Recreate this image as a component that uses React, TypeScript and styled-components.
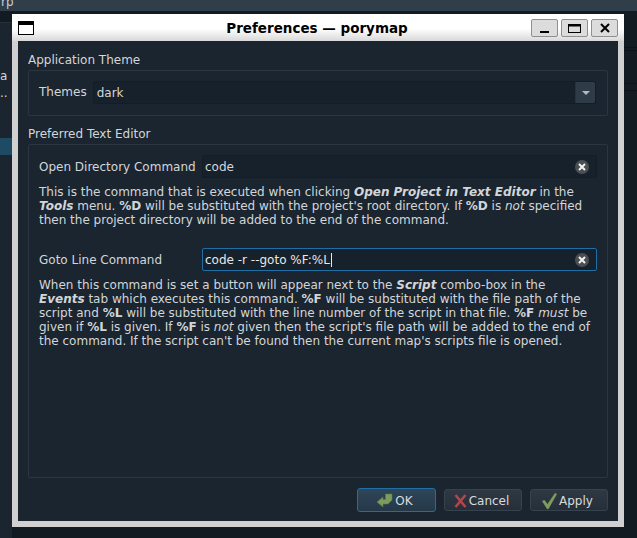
import styled, { createGlobalStyle } from 'styled-components';

const GlobalStyle = createGlobalStyle`
  html, body {
    margin: 0;
    padding: 0;
    background: #11181f;
  }
  #root {
    width: 637px;
    height: 538px;
    overflow: hidden;
  }
`;

const Desktop = styled.div`
  position: relative;
  width: 637px;
  height: 538px;
  background: #121a22;
  font: 12px 'DejaVu Sans', sans-serif;
  color: #d3d6d9;
  overflow: hidden;
`;

const BackBar = styled.div`
  height: 11px;
  padding-left: 1px;
  background: #303e4a;
  color: #c8ccd0;
  font-size: 12px;
  line-height: 4px;
`;

const BackSide = styled.div`
  position: absolute;
  left: 0;
  top: 22px;
  width: 12px;
  height: 516px;
  background: #1a2530;
  border-top: 1px solid #253039;
`;

const BackText = styled.div<{ $top: number }>`
  position: absolute;
  left: 0;
  top: ${p => p.$top}px;
  line-height: 14px;
`;

const BackSelected = styled.div`
  position: absolute;
  left: 0;
  top: 115px;
  width: 12px;
  height: 17px;
  background: #1f4a63;
`;

const BackRule = styled.div<{ $top: number }>`
  position: absolute;
  left: 624px;
  right: 0;
  top: ${p => p.$top}px;
  height: 1px;
  background: #0c1218;
`;

const Window = styled.div`
  position: absolute;
  left: 12px;
  top: 14px;
  width: 612px;
  height: 513px;
  display: flex;
  flex-direction: column;
  background: #d0d0d0;
  border-radius: 2px 2px 0 0;
`;

const TitleBar = styled.div`
  height: 27px;
  flex: none;
  display: flex;
  align-items: center;
  padding: 0 6px;
  background: linear-gradient(#ffffff 0, #ffffff 55%, #d8d8d8 100%);
`;

const TitleText = styled.div`
  flex: 1;
  text-align: center;
  font: bold 13.5px 'DejaVu Sans', sans-serif;
  color: #000;
  padding-left: 69px;
`;

const WinButtons = styled.div`
  display: flex;
  gap: 3px;
  margin-top: 1px;
`;

const WinButton = styled.div`
  width: 27px;
  height: 18px;
  box-sizing: border-box;
  display: flex;
  align-items: center;
  justify-content: center;
  background: #dcdcdc;
  border: 1px solid #8f8f8f;
  border-radius: 2px;
`;

const Content = styled.div`
  flex: 1;
  margin: 0 6px 6px;
  background: #1a2530;
  padding: 12px 10px 9px;
  display: flex;
  flex-direction: column;
`;

const GroupTitle = styled.div<{ $mt?: number }>`
  line-height: 14px;
  margin-top: ${p => p.$mt ?? 0}px;
  margin-bottom: 3px;
`;

const ThemeBox = styled.div`
  height: 46px;
  box-sizing: border-box;
  flex: none;
  border: 1px solid #2b3640;
  border-radius: 2px;
  padding: 10px 11px 0 10px;
  display: flex;
  align-items: flex-start;
  gap: 6px;
`;

const EditorBox = styled.div`
  flex: 1;
  border: 1px solid #2b3640;
  border-radius: 2px;
  padding: 10px 10px 0 10px;
`;

const FormLabel = styled.div`
  line-height: 23px;
  white-space: nowrap;
`;

const Combo = styled.div`
  flex: 1;
  height: 23px;
  box-sizing: border-box;
  display: flex;
  align-items: center;
  justify-content: space-between;
  padding-left: 3px;
  background: #17212b;
  border: 1px solid #141d26;
  border-radius: 2px;
`;

const ComboArrow = styled.div`
  width: 19px;
  height: 21px;
  display: flex;
  align-items: center;
  justify-content: center;
  background: #2f3b47;
  border-radius: 0 2px 2px 0;
  border-left: 1px solid #27323c;

  &::after {
    content: '';
    border-left: 4px solid transparent;
    border-right: 4px solid transparent;
    border-top: 4px solid #b4b9be;
  }
`;

const FieldRow = styled.div`
  display: flex;
  align-items: center;
`;

const FieldLabel = styled.div`
  width: 163px;
  flex: none;
  line-height: 21px;
  padding-top: 2px;
`;

const LineEdit = styled.div<{ $focus?: boolean }>`
  flex: 1;
  height: 23px;
  box-sizing: border-box;
  display: flex;
  align-items: center;
  justify-content: space-between;
  padding: 0 7px 0 2px;
  background: #17212b;
  border: 1px solid ${p => (p.$focus ? '#1d6fa5' : '#141d26')};
  border-radius: 2px;
  color: ${p => (p.$focus ? '#e6e8ea' : '#d3d6d9')};
`;

const Caret = styled.span`
  display: inline-block;
  width: 1px;
  height: 14px;
  margin-left: 1px;
  vertical-align: -3px;
  background: #e6e8ea;
`;

const ClearIcon = styled.div`
  position: relative;
  width: 14px;
  height: 14px;
  flex: none;
  border-radius: 50%;
  background: #4b4f52;
  display: flex;
  align-items: center;
  justify-content: center;
`;

const HelpText = styled.p<{ $mt?: number; $mb?: number }>`
  margin: ${p => p.$mt ?? 7}px 0 ${p => p.$mb ?? 0}px;
  line-height: 14px;
  white-space: nowrap;
`;

const ButtonRow = styled.div`
  flex: none;
  display: flex;
  justify-content: flex-end;
  align-items: center;
  gap: 8px;
  margin-top: 10px;
  height: 24px;
`;

const DialogButton = styled.div<{ $primary?: boolean; $w: number }>`
  width: ${p => p.$w}px;
  height: ${p => (p.$primary ? 24 : 22)}px;
  box-sizing: border-box;
  display: flex;
  align-items: center;
  justify-content: center;
  gap: 2px;
  padding: 1px 3px 0 0;
  border-radius: 3px;
  border: 1px solid ${p => (p.$primary ? '#1d6fa5' : '#36424d')};
  background: ${p =>
    p.$primary
      ? 'linear-gradient(#2f4659, #243848)'
      : 'linear-gradient(#2e3944, #262f39)'};
  color: #d8dbde;
`;

const Clear = () => (
  <ClearIcon>
    <svg width="8" height="8" viewBox="0 0 8 8">
      <path d="M1 1 L7 7 M7 1 L1 7" stroke="#f2f2f2" strokeWidth="2" />
    </svg>
  </ClearIcon>
);

const OkIcon = () => (
  <svg width="16" height="15" viewBox="0 0 16 15">
    <path
      d="M0 9 L6 4 V6.5 H8.5 V1 H15 V7 L11 11 H6 V14 Z"
      fill="#7d9c5c"
      stroke="#5d7a44"
      strokeWidth="0.6"
    />
  </svg>
);

const CancelIcon = () => (
  <svg width="13" height="14" viewBox="0 0 13 14">
    <path d="M1.5 1 L11.5 13 M11.5 1 L1.5 13" stroke="#b8444b" strokeWidth="2.6" />
  </svg>
);

const ApplyIcon = () => (
  <svg width="15" height="16" viewBox="0 0 15 16">
    <path d="M0 8 L2.5 7 L5.5 11 L13 0 L15 1 L6.5 16 H5 Z" fill="#7d9c5c" />
  </svg>
);

const App = () => {
  return (
    <>
      <GlobalStyle />
      <Desktop>
        <BackBar>rp</BackBar>
        <BackSide>
          <BackText $top={46}>a</BackText>
          <BackText $top={63}>..</BackText>
          <BackSelected />
        </BackSide>
        <BackRule $top={47} />
        <BackRule $top={50} />
        <BackRule $top={83} />
        <BackRule $top={90} />
        <Window>
          <TitleBar>
            <svg width="16" height="14" viewBox="0 0 16 14">
              <rect x="0.5" y="0.5" width="15" height="13" fill="#fff" stroke="#000" />
              <rect x="0" y="0" width="16" height="4" fill="#000" />
            </svg>
            <TitleText>Preferences — porymap</TitleText>
            <WinButtons>
              <WinButton>
                <svg width="10" height="10" viewBox="0 0 10 10">
                  <rect x="0" y="8" width="9" height="2" fill="#000" />
                </svg>
              </WinButton>
              <WinButton>
                <svg width="13" height="9" viewBox="0 0 13 9">
                  <rect x="0.5" y="0.5" width="12" height="8" fill="none" stroke="#000" />
                  <rect x="0" y="0" width="13" height="2.5" fill="#000" />
                </svg>
              </WinButton>
              <WinButton>
                <svg width="10" height="10" viewBox="0 0 10 10">
                  <path d="M1 1 L9 9 M9 1 L1 9" stroke="#000" strokeWidth="2" />
                </svg>
              </WinButton>
            </WinButtons>
          </TitleBar>
          <Content>
            <GroupTitle>Application Theme</GroupTitle>
            <ThemeBox>
              <FormLabel>Themes</FormLabel>
              <Combo>
                dark
                <ComboArrow />
              </Combo>
            </ThemeBox>
            <GroupTitle $mt={11}>Preferred Text Editor</GroupTitle>
            <EditorBox>
              <FieldRow>
                <FieldLabel>Open Directory Command</FieldLabel>
                <LineEdit>
                  <span>code</span>
                  <Clear />
                </LineEdit>
              </FieldRow>
              <HelpText $mt={7} $mb={21}>
                This is the command that is executed when clicking{' '}
                <b><i>Open Project in Text Editor</i></b> in the
                <br />
                <b><i>Tools</i></b> menu. <b>%D</b> will be substituted with the project's root
                directory. If <b>%D</b> is <i>not</i> specified
                <br />
                then the project directory will be added to the end of the command.
              </HelpText>
              <FieldRow>
                <FieldLabel>Goto Line Command</FieldLabel>
                <LineEdit $focus>
                  <span>
                    code -r --goto %F:%L
                    <Caret />
                  </span>
                  <Clear />
                </LineEdit>
              </FieldRow>
              <HelpText $mt={7}>
                When this command is set a button will appear next to the <b><i>Script</i></b>{' '}
                combo-box in the
                <br />
                <b><i>Events</i></b> tab which executes this command. <b>%F</b> will be substituted
                with the file path of the
                <br />
                script and <b>%L</b> will be substituted with the line number of the script in that
                file. <b>%F</b> <i>must</i> be
                <br />
                given if <b>%L</b> is given. If <b>%F</b> is <i>not</i> given then the script's file
                path will be added to the end of
                <br />
                the command. If the script can't be found then the current map's scripts file is
                opened.
              </HelpText>
            </EditorBox>
            <ButtonRow>
              <DialogButton $primary $w={79}>
                <OkIcon />
                OK
              </DialogButton>
              <DialogButton $w={78}>
                <CancelIcon />
                Cancel
              </DialogButton>
              <DialogButton $w={78}>
                <ApplyIcon />
                Apply
              </DialogButton>
            </ButtonRow>
          </Content>
        </Window>
      </Desktop>
    </>
  );
};

export default App;
